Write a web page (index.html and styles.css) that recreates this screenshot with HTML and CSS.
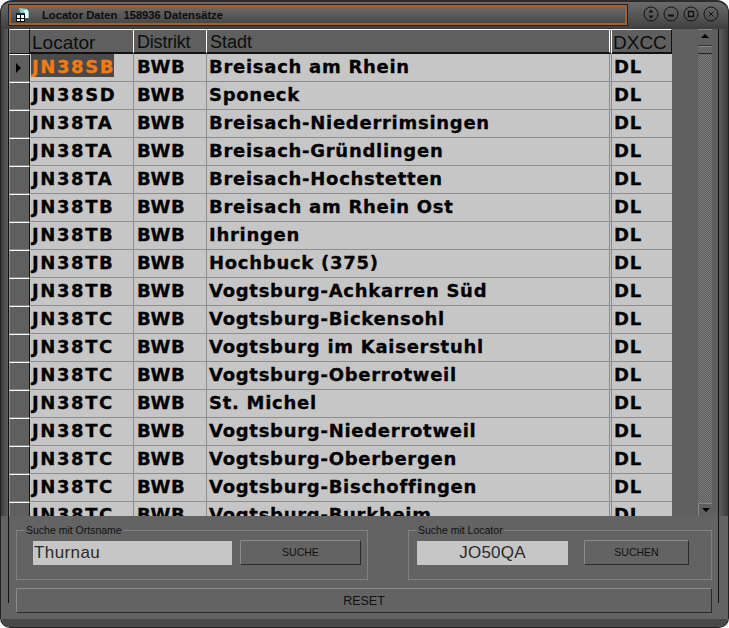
FILE: index.html
```html
<!DOCTYPE html>
<html lang="de">
<head>
<meta charset="utf-8">
<title>Locator Daten</title>
<link rel="stylesheet" href="styles.css">
</head>
<body>
<div class="window">
  <header class="titlebar">
    <div class="title-box">
      <svg class="app-icon" width="16" height="16" viewBox="0 0 16 16"><path d="M5 1l8 1 2 3v6H8z" fill="#8fd0cc"/><path d="M10 3h4v8h-4z" fill="#dff"/><path d="M2.500 6.500h8v8h-8z" fill="#fff" stroke="#000"/><path d="M2 6h9v2H2z" fill="#0a2a3a"/><path d="M6.500 8v6M3 11.500h7" stroke="#000" fill="none"/></svg>
      <span class="title-text">Locator Daten&nbsp; 158936 Datensätze</span>
    </div>
    <div class="win-btns">
      <svg class="win-btn" viewBox="0 0 16 16"><circle cx="8" cy="8" r="7"/><path class="solid" d="M8 3.500l2.500 3h-5zM8 12.500l2.500-3h-5z"/></svg>
      <svg class="win-btn" viewBox="0 0 16 16"><circle cx="8" cy="8" r="7"/><path class="solid" d="M5 8.500h6v2H5z"/></svg>
      <svg class="win-btn" viewBox="0 0 16 16"><circle cx="8" cy="8" r="7"/><path d="M5.500 5.500h5v5h-5z" stroke-width="1.400"/></svg>
      <svg class="win-btn" viewBox="0 0 16 16"><circle cx="8" cy="8" r="7"/><path d="M5.500 5.500l5 5M10.500 5.500l-5 5"/></svg>
    </div>
  </header>
  <div class="main">
    <div class="grid">
      <div class="row head">
        <div class="ind"></div><div class="c loc">Locator</div><div class="c dis">Distrikt</div><div class="c sta">Stadt</div><div class="c dx">DXCC</div>
      </div>
      <div class="row"><div class="ind"><span class="arrow"></span></div><div class="c loc"><span class="sel">JN38SB</span></div><div class="c dis">BWB</div><div class="c sta">Breisach am Rhein</div><div class="c dx">DL</div></div>
      <div class="row"><div class="ind"></div><div class="c loc">JN38SD</div><div class="c dis">BWB</div><div class="c sta">Sponeck</div><div class="c dx">DL</div></div>
      <div class="row"><div class="ind"></div><div class="c loc">JN38TA</div><div class="c dis">BWB</div><div class="c sta">Breisach-Niederrimsingen</div><div class="c dx">DL</div></div>
      <div class="row"><div class="ind"></div><div class="c loc">JN38TA</div><div class="c dis">BWB</div><div class="c sta">Breisach-Gründlingen</div><div class="c dx">DL</div></div>
      <div class="row"><div class="ind"></div><div class="c loc">JN38TA</div><div class="c dis">BWB</div><div class="c sta">Breisach-Hochstetten</div><div class="c dx">DL</div></div>
      <div class="row"><div class="ind"></div><div class="c loc">JN38TB</div><div class="c dis">BWB</div><div class="c sta">Breisach am Rhein Ost</div><div class="c dx">DL</div></div>
      <div class="row"><div class="ind"></div><div class="c loc">JN38TB</div><div class="c dis">BWB</div><div class="c sta">Ihringen</div><div class="c dx">DL</div></div>
      <div class="row"><div class="ind"></div><div class="c loc">JN38TB</div><div class="c dis">BWB</div><div class="c sta">Hochbuck (375)</div><div class="c dx">DL</div></div>
      <div class="row"><div class="ind"></div><div class="c loc">JN38TB</div><div class="c dis">BWB</div><div class="c sta">Vogtsburg-Achkarren Süd</div><div class="c dx">DL</div></div>
      <div class="row"><div class="ind"></div><div class="c loc">JN38TC</div><div class="c dis">BWB</div><div class="c sta">Vogtsburg-Bickensohl</div><div class="c dx">DL</div></div>
      <div class="row"><div class="ind"></div><div class="c loc">JN38TC</div><div class="c dis">BWB</div><div class="c sta">Vogtsburg im Kaiserstuhl</div><div class="c dx">DL</div></div>
      <div class="row"><div class="ind"></div><div class="c loc">JN38TC</div><div class="c dis">BWB</div><div class="c sta">Vogtsburg-Oberrotweil</div><div class="c dx">DL</div></div>
      <div class="row"><div class="ind"></div><div class="c loc">JN38TC</div><div class="c dis">BWB</div><div class="c sta">St. Michel</div><div class="c dx">DL</div></div>
      <div class="row"><div class="ind"></div><div class="c loc">JN38TC</div><div class="c dis">BWB</div><div class="c sta">Vogtsburg-Niederrotweil</div><div class="c dx">DL</div></div>
      <div class="row"><div class="ind"></div><div class="c loc">JN38TC</div><div class="c dis">BWB</div><div class="c sta">Vogtsburg-Oberbergen</div><div class="c dx">DL</div></div>
      <div class="row"><div class="ind"></div><div class="c loc">JN38TC</div><div class="c dis">BWB</div><div class="c sta">Vogtsburg-Bischoffingen</div><div class="c dx">DL</div></div>
      <div class="row"><div class="ind"></div><div class="c loc">JN38TC</div><div class="c dis">BWB</div><div class="c sta">Vogtsburg-Burkheim</div><div class="c dx">DL</div></div>
    </div>
    <div class="scrollbar">
      <div class="sb-btn"><span class="tri up"></span></div>
      <div class="sb-thumb"></div>
      <div class="sb-track"></div>
      <div class="sb-btn bottom"><span class="tri down"></span></div>
    </div>
  </div>
  <div class="panel">
    <div class="groups">
      <fieldset class="group g1">
        <legend>Suche mit Ortsname</legend>
        <div class="field f1">Thurnau</div>
        <div class="btn b1">SUCHE</div>
      </fieldset>
      <fieldset class="group g2">
        <legend>Suche mit Locator</legend>
        <div class="field f2">JO50QA</div>
        <div class="btn b2">SUCHEN</div>
      </fieldset>
    </div>
    <div class="btn reset">RESET</div>
  </div>
</div>
</body>
</html>
```
FILE: styles.css
```css
* { box-sizing: border-box; }
html, body { margin: 0; padding: 0; background: #fff; }
body { width: 729px; height: 628px; overflow: hidden; font-family: "Liberation Sans", Arial, sans-serif; }
.window { width: 729px; height: 628px; background: linear-gradient(90deg, #3a3a3a, #5e5e5e 7px, #5e5e5e 718px, #3c3c3c); border-radius: 12px 12px 10px 10px; border: 1px solid #222; border-top: 2px solid #2c2c2c; display: flex; flex-direction: column; overflow: hidden; }
.titlebar { height: 27px; flex: none; display: flex; align-items: center; padding: 3px 9px 4px 8px; background: linear-gradient(#6a6a6a, #525252 60%, #3e3e3e); }
.title-box { width: 618px; height: 20px; border: 2px solid #a5602c; outline: 1px solid #222; display: flex; align-items: center; padding-left: 3px; gap: 12px; background: linear-gradient(#6a6a6a, #484848); }
.app-icon { flex: none; }
.title-text { font-size: 11.2px; font-weight: bold; color: #0d0d0d; white-space: nowrap; }
.win-btns { margin-left: auto; margin-top: -2px; display: flex; gap: 4px; }
.win-btn { width: 16px; height: 16px; fill: none; stroke: #111; stroke-width: 1; }
.win-btn .solid { fill: #111; stroke: none; }
.main { height: 487px; flex: none; display: flex; margin-left: 7px; margin-right: 9px; background: #5f5f5f; border-left: 1px solid #111; border-right: 1px solid #111; overflow: hidden; }
.grid { width: 663px; flex: none; overflow: hidden; }
.row { display: grid; grid-template-columns: 21px 104px 73px 405px 60px; height: 28px; background: #c6c6c6; font: bold 18px/25px "DejaVu Sans", sans-serif; color: #000; -webkit-text-stroke: 0.3px #000; }
.row .c { border-right: 1px solid #8d8d8d; border-bottom: 1px solid #8d8d8d; padding-left: 3px; overflow: hidden; white-space: nowrap; letter-spacing: 0.72px; }
.row .c.loc { padding-left: 2px; letter-spacing: 1.6px; }
.row .c.sta { border-right: 3px double #8d8d8d; padding-left: 2px; }
.row .c.dx { border-right: 0; padding-left: 2px; }
.ind { background: #5f5f5f; border: 1px solid #8c8c8c; border-top-color: #fff; border-left-color: #8c8c8c; border-right-color: #111; display: flex; align-items: center; padding-left: 6px; }
.arrow { width: 0; height: 0; border-left: 5px solid #000; border-top: 5px solid transparent; border-bottom: 5px solid transparent; }
.row.head { height: 25px; background: #5f5f5f; font: 18px/25px "Liberation Sans", sans-serif; color: #0d0d0d; -webkit-text-stroke: 0; }
.row.head .c { border-top: 1px solid #fff; border-right: 1px solid #fff; border-bottom: 2px solid #111; padding-left: 3px; letter-spacing: 0; }
.row.head .c.loc { font-size: 19px; padding-left: 2px; }
.row.head .c.dis { letter-spacing: -0.2px; }
.row.head .c.sta { border-right: 3px double #fff; padding-left: 3px; }
.row.head .c.dx { font-size: 19px; border-right: 1px solid #111; padding-left: 1px; }
.row.head .ind { border-bottom-color: #111; }
.sel { display: block; width: 83px; height: 23px; margin-left: -1px; padding-left: 1px; background: #4a4a4a; color: #f47a12; -webkit-text-stroke: 0.3px #f47a12; overflow: hidden; }
.scrollbar { width: 14px; flex: none; margin-left: 26px; display: flex; flex-direction: column; background: #5f5f5f; }
.sb-btn { height: 15px; flex: none; display: flex; align-items: center; justify-content: center; background: #5f5f5f; border-top: 1px solid #888; padding-bottom: 2px; }
.sb-btn.bottom { height: 13px; border-left: 1px solid #888; padding-bottom: 0; }
.tri { width: 0; height: 0; border-left: 4px solid transparent; border-right: 4px solid transparent; }
.tri.up { border-bottom: 4px solid #000; }
.tri.down { border-top: 4px solid #000; }
.sb-thumb { height: 9px; flex: none; margin-top: 1px; border-top: 1px solid #333; border-bottom: 1px solid #222; background: #666; box-shadow: inset 0 1px 0 #888; }
.sb-track { flex: 1; background: repeating-conic-gradient(#5a5a5a 0 25%, #7e7e7e 0 50%) 0 0 / 2px 2px; }
.panel { flex: 1; position: relative; display: flex; flex-direction: column; gap: 8px; padding: 8px 16px 0 15px; background: #636363; border-bottom: 8px solid #484848; }
.panel::before, .panel::after { content: ""; position: absolute; top: 0; width: 1px; height: 87px; background: #111; }
.panel::before { left: 7px; }
.panel::after { right: 9px; }
.groups { display: flex; justify-content: space-between; }
.group { margin: 0; padding: 0; height: 56px; border: 1px solid #808080; display: flex; align-items: flex-start; }
.group legend { font-size: 10.5px; line-height: 12px; color: #111; padding: 0 1px; margin-left: 8px; }
.g1 { width: 352px; }
.g2 { width: 304px; }
.field { background: #c6c6c6; height: 24px; font: 17px/24px "Liberation Sans", sans-serif; color: #2a2a2a; margin-top: 5px; letter-spacing: 0.2px; }
.f1 { width: 199px; margin-left: 16px; padding-left: 1px; letter-spacing: 0.4px; }
.f2 { width: 151px; margin-left: 8px; text-align: center; }
.btn { height: 25px; background: #636363; border: 1px solid; border-color: #8a8a8a #2a2a2a #2a2a2a #8a8a8a; font-size: 10.5px; line-height: 22px; text-align: center; color: #111; }
.b1 { width: 121px; margin-left: 8px; margin-top: 4px; }
.b2 { width: 105px; margin-left: 16px; margin-top: 4px; }
.reset { width: 696px; font-size: 12.5px; line-height: 24px; }
```
